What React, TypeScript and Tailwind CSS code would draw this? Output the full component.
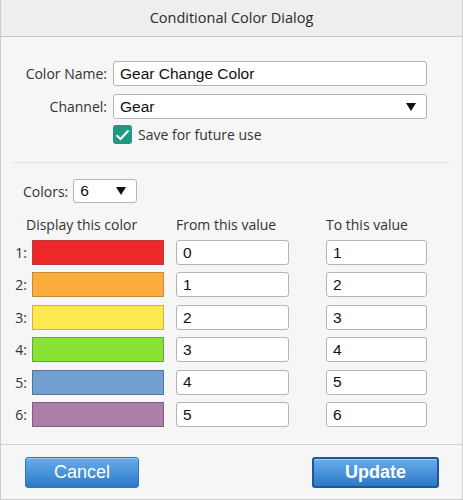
import React from 'react';

const ROWS = [
  { n: 1, fill: 'bg-[#ef2929]', edge: 'border-[#b83a3a]', from: '0', to: '1' },
  { n: 2, fill: 'bg-[#fcad3e]', edge: 'border-[#c58a3a]', from: '1', to: '2' },
  { n: 3, fill: 'bg-[#fce94f]', edge: 'border-[#c9b342]', from: '2', to: '3' },
  { n: 4, fill: 'bg-[#8ae234]', edge: 'border-[#66a83a]', from: '3', to: '4' },
  { n: 5, fill: 'bg-[#729fcf]', edge: 'border-[#52779f]', from: '4', to: '5' },
  { n: 6, fill: 'bg-[#ad7fa8]', edge: 'border-[#7f5f7c]', from: '5', to: '6' },
];

const ui = { fontFamily: '"Open Sans", "Noto Sans", sans-serif' };
const arial = { fontFamily: '"Liberation Sans", Arial, sans-serif' };

function Field({ value, className = '' }: { value: string; className?: string }) {
  return (
    <div
      className={`h-[25px] bg-white border border-[#b4b4b4] rounded-[3px] flex items-center px-[6px] text-[15.5px] text-[#111] ${className}`}
      style={arial}
    >
      {value}
    </div>
  );
}

function Arrow() {
  return (
    <svg width="10" height="8" viewBox="0 0 10 8" className="shrink-0">
      <path d="M0 0 H10 L5 8 Z" fill="#111" />
    </svg>
  );
}

export default function App() {
  return (
    <div className="w-[463px] h-[500px] bg-[#f6f6f6] border-x border-b border-[#cdcdcd] flex flex-col text-[#333]" style={ui}>
      {/* title */}
      <div className="h-[37px] shrink-0 bg-[#eeeeee] border-b border-[#c9c9c9] flex items-center justify-center text-[14.5px] text-[#2a2a2a]">
        Conditional Color Dialog
      </div>

      {/* name / channel */}
      <div className="pt-[24px] pl-[11px] flex flex-col gap-[8px]">
        <div className="flex items-center gap-[6px]">
          <span className="w-[95px] text-right text-[14px]">Color Name:</span>
          <Field value="Gear Change Color" className="w-[314px]" />
        </div>
        <div className="flex items-center gap-[6px]">
          <span className="w-[95px] text-right text-[14px]">Channel:</span>
          <div className="w-[314px] h-[25px] bg-white border border-[#b4b4b4] rounded-[3px] flex items-center justify-between pl-[6px] pr-[10px] text-[15.5px] text-[#111]" style={arial}>
            Gear
            <Arrow />
          </div>
        </div>
      </div>
      <div className="mt-[6px] pl-[112px] flex items-center gap-[6px] h-[19px]">
        <span className="w-[19px] h-[19px] rounded-[3px] bg-[#1d9a80] flex items-center justify-center">
          <svg width="15" height="12" viewBox="0 0 15 12">
            <path d="M1.5 6.2 L5.5 10 L13.5 1.5" stroke="#fff" strokeWidth="2" fill="none" />
          </svg>
        </span>
        <span className="text-[14px]">Save for future use</span>
      </div>

      <div className="mt-[18px] mx-[12px] h-px bg-[#e2e2e2]" />

      {/* colors */}
      <div className="mt-[16px] pl-[22px] flex items-center gap-[5px]">
        <span className="text-[14px]">Colors:</span>
        <div className="w-[64px] h-[24px] bg-white border border-[#b4b4b4] rounded-[3px] flex items-center justify-between pl-[6px] pr-[10px] text-[15.5px] text-[#111]" style={arial}>
          6
          <Arrow />
        </div>
      </div>

      <div className="mt-[11px] h-[20px] flex items-center text-[14px]">
        <span className="ml-[25px] w-[150px]">Display this color</span>
        <span className="w-[150px]">From this value</span>
        <span>To this value</span>
      </div>

      <div className="mt-[6px] flex flex-col gap-[7.4px]">
        {ROWS.map((r) => (
          <div key={r.n} className="flex items-center h-[25px]">
            <span className="w-[27px] text-right pr-[1px] text-[14px]">{r.n}:</span>
            <div className={`ml-[4px] w-[132px] h-[25px] border ${r.fill} ${r.edge}`} />
            <Field value={r.from} className="ml-[12px] w-[113px]" />
            <Field value={r.to} className="ml-[37px] w-[101px]" />
          </div>
        ))}
      </div>

      {/* footer */}
      <div className="mt-auto h-[55px] shrink-0 border-t border-[#d2d2d2] flex items-start justify-between pt-[12px] pl-[24px] pr-[23px]" style={arial}>
        <button className="w-[114px] h-[31px] rounded-[3px] border border-[#2f74bd] bg-gradient-to-b from-[#68acea] to-[#2a79c9] text-white text-[18px] shadow-[inset_0_1px_0_rgba(255,255,255,0.35)]">
          Cancel
        </button>
        <button className="w-[127px] h-[31px] rounded-[3px] border-2 border-[#1c5797] bg-gradient-to-b from-[#68acea] to-[#2a79c9] text-white text-[18px] font-bold shadow-[inset_0_1px_0_rgba(255,255,255,0.35)]">
          Update
        </button>
      </div>
    </div>
  );
}
